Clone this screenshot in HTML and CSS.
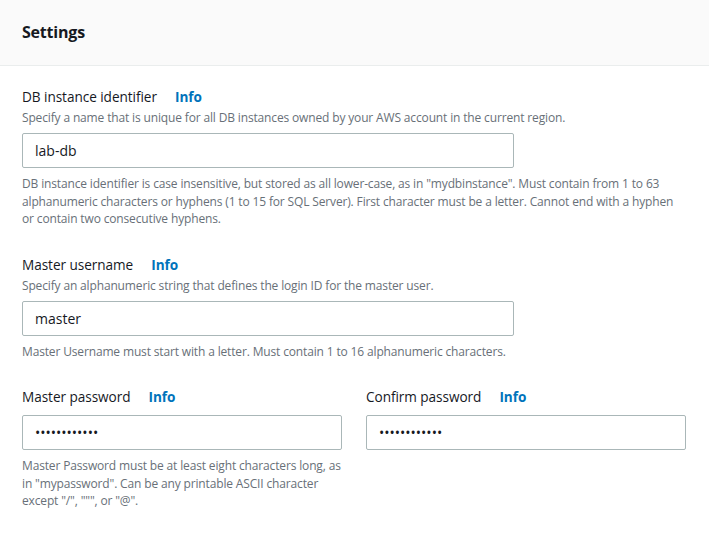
FILE: index.html
```html
<!DOCTYPE html>
<html>
<head>
<meta charset="utf-8">
<link rel="stylesheet" href="styles.css">
</head>
<body>
<div class="panel">
  <div class="header"><h2 class="title">Settings</h2></div>
  <div class="content">
    <div class="field">
      <div class="label-row"><span class="label">DB instance identifier</span><a class="info">Info</a></div>
      <div class="desc">Specify a name that is unique for all DB instances owned by your AWS account in the current region.</div>
      <input class="input wide" type="text" value="lab-db">
      <div class="constraint">DB instance identifier is case insensitive, but stored as all lower-case, as in "mydbinstance". Must contain from 1 to 63 alphanumeric characters or hyphens (1 to 15 for SQL Server). First character must be a letter. Cannot end with a hyphen or contain two consecutive hyphens.</div>
    </div>
    <div class="field">
      <div class="label-row"><span class="label">Master username</span><a class="info">Info</a></div>
      <div class="desc">Specify an alphanumeric string that defines the login ID for the master user.</div>
      <input class="input wide" type="text" value="master">
      <div class="constraint">Master Username must start with a letter. Must contain 1 to 16 alphanumeric characters.</div>
    </div>
    <div class="cols">
      <div class="field">
        <div class="label-row"><span class="label">Master password</span><a class="info">Info</a></div>
        <input class="input" type="password" value="abcdefghijkl">
        <div class="constraint">Master Password must be at least eight characters long, as in "mypassword". Can be any printable ASCII character except "/", """, or "@".</div>
      </div>
      <div class="field">
        <div class="label-row"><span class="label">Confirm password</span><a class="info">Info</a></div>
        <input class="input" type="password" value="abcdefghijkl">
      </div>
    </div>
  </div>
</div>
</body>
</html>
```

FILE: styles.css
```css
html, body {
  margin: 0;
  padding: 0;
  background: #ffffff;
}
body {
  font-family: "Open Sans", "Noto Sans", sans-serif;
  color: #16191f;
}
.panel {
  width: 709px;
}
.header {
  background: #fafafa;
  border-bottom: 1px solid #eaeded;
  height: 66px;
  box-sizing: border-box;
  display: flex;
  align-items: center;
  padding: 0 22px 2px;
}
.title {
  margin: 0;
  font-size: 16px;
  font-weight: 700;
  color: #16191f;
  letter-spacing: -0.2px;
}
.content {
  padding: 21px 22px 0;
  display: flex;
  flex-direction: column;
  gap: 27px;
}
.field {
  display: flex;
  flex-direction: column;
}
.label-row {
  display: flex;
  gap: 18px;
  font-size: 13.6px;
  line-height: 20px;
  letter-spacing: -0.05px;
}
.label {
  color: #16191f;
}
.info {
  color: #0073bb;
  font-weight: 700;
}
.desc {
  font-size: 12px;
  line-height: 16px;
  color: #687078;
  margin-top: 3px;
  letter-spacing: -0.15px;
}
.input {
  box-sizing: border-box;
  height: 35px;
  border: 1px solid #aab7b8;
  border-radius: 2px;
  padding: 0 12px;
  font-family: inherit;
  font-size: 14px;
  color: #16191f;
  margin-top: 7px;
  outline: none;
}
.wide {
  width: 492px;
}
.constraint {
  font-size: 12px;
  line-height: 17.5px;
  color: #687078;
  margin-top: 7px;
  letter-spacing: -0.15px;
}
.cols {
  display: grid;
  grid-template-columns: 320px 320px;
  column-gap: 24px;
}
.cols .input {
  width: 320px;
  margin-top: 8px;
}
```
